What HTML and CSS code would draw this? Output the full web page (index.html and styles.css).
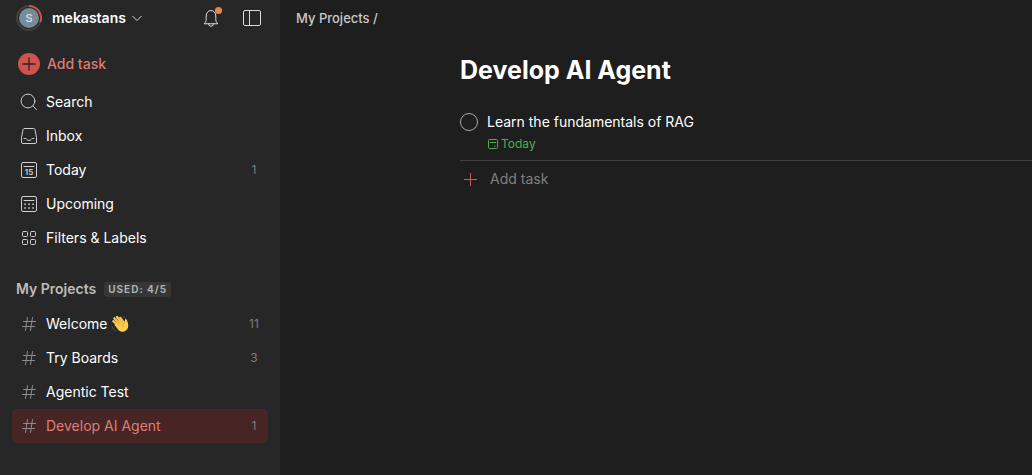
FILE: index.html
```html
<!DOCTYPE html>
<html lang="en">
<head>
<meta charset="utf-8">
<meta name="viewport" content="width=device-width, initial-scale=1">
<title>Develop AI Agent</title>
<link rel="stylesheet" href="styles.css">
</head>
<body>
<div class="app">
  <aside class="sidebar">
    <header class="topbar">
      <button class="account" type="button">
        <span class="avatar">
          <svg class="ring" viewBox="0 0 26 26" aria-hidden="true">
            <circle cx="13" cy="13" r="12" stroke="#414141" stroke-width="2"/>
            <path d="M13 1a12 12 0 0 1 11.3 16" stroke="#c9504b" stroke-width="2"/>
          </svg>
          <span class="initial">S</span>
        </span>
        <span class="name">mekastans</span>
        <svg class="chevron" viewBox="0 0 12 12" aria-hidden="true"><path d="M1.500 4L6 8.500 10.500 4"/></svg>
      </button>
      <div class="tools">
        <button class="tool" type="button" aria-label="Notifications">
          <svg class="icon bright" viewBox="0 0 24 24" aria-hidden="true">
            <path d="M5.500 17.500c1.300-1.200 1.700-2.400 1.700-5V10c0-3.100 2-5.500 4.800-5.500s4.800 2.400 4.800 5.500v2.500c0 2.600.4 3.800 1.700 5z"/>
            <path d="M9.500 17.800a2.500 2.500 0 0 0 5 0"/>
            <circle class="dot" cx="19.500" cy="4.500" r="3.600"/>
          </svg>
        </button>
        <button class="tool" type="button" aria-label="Toggle sidebar">
          <svg class="icon bright" viewBox="0 0 24 24" aria-hidden="true">
            <rect x="3.500" y="4.500" width="17" height="15" rx="1.500"/><path d="M9.500 4.500v15"/>
          </svg>
        </button>
      </div>
    </header>

    <button class="row add" type="button">
      <svg class="icon" viewBox="0 0 24 24" aria-hidden="true"><circle class="disc" cx="12" cy="12" r="11"/><path class="plus" d="M12 6v12M6 12h12"/></svg>
      <span class="label">Add task</span>
    </button>

    <nav class="list" aria-label="Views">
      <a class="row" href="#search">
        <svg class="icon" viewBox="0 0 24 24" aria-hidden="true"><circle cx="11" cy="11" r="6.900"/><path d="M16 16l3.500 3.500"/></svg>
        <span class="label">Search</span>
      </a>
      <a class="row" href="#inbox">
        <svg class="icon" viewBox="0 0 24 24" aria-hidden="true"><path d="M7.500 4.500h9a1.500 1.500 0 0 1 1.500 1.200l1.500 7.800V18a1.500 1.500 0 0 1-1.500 1.500H6A1.500 1.500 0 0 1 4.500 18v-4.500L6 5.700a1.500 1.500 0 0 1 1.500-1.200z"/><path d="M7 14.500h1.500c.7 0 1 .3 1.300.9.900 1.500 3.500 1.500 4.400 0 .3-.6.600-.9 1.300-.9H17"/></svg>
        <span class="label">Inbox</span>
      </a>
      <a class="row" href="#today">
        <svg class="icon" viewBox="0 0 24 24" aria-hidden="true"><rect x="4.500" y="4.500" width="15" height="15" rx="1.500"/><path d="M7 8.500h10"/><text class="day" x="12" y="17" text-anchor="middle">15</text></svg>
        <span class="label">Today</span><span class="count">1</span>
      </a>
      <a class="row" href="#upcoming">
        <svg class="icon" viewBox="0 0 24 24" aria-hidden="true"><rect x="4.500" y="4.500" width="15" height="15" rx="1.500"/><path d="M7 8.500h10"/><path class="dots" d="M7.300 12.300h1.500M11.300 12.300h1.500M15.300 12.300h1.500M7.300 16h1.500M11.300 16h1.500M15.300 16h1.500"/></svg>
        <span class="label">Upcoming</span>
      </a>
      <a class="row" href="#filters">
        <svg class="icon" viewBox="0 0 24 24" aria-hidden="true"><rect x="5.500" y="5.500" width="5" height="5" rx="1"/><rect x="13.500" y="5.500" width="5" height="5" rx="1"/><rect x="5.500" y="13.500" width="5" height="5" rx="1"/><rect x="13.500" y="13.500" width="5" height="5" rx="1"/></svg>
        <span class="label">Filters &amp; Labels</span>
      </a>
    </nav>

    <div class="section">
      <h2 class="heading">My Projects</h2><span class="badge">Used: 4/5</span>
    </div>

    <nav class="list" aria-label="My Projects">
      <a class="row" href="#welcome">
        <svg class="icon hash" viewBox="0 0 24 24" aria-hidden="true"><path d="M10.500 5.500l-2 13M15.500 5.500l-2 13M6.500 9.500h12M5.500 14.500h12"/></svg>
        <span class="label">Welcome
          <svg class="wave" viewBox="0 0 18 18" role="img" aria-label="waving hand">
            <g stroke="#ffcc4d" stroke-width="2.300" stroke-linecap="round">
              <path d="M8 11L2.300 6.200M9 9L3.400 3.300M11 8L6.100 2M13 8L9.300 3"/>
            </g>
            <path fill="#ffcc4d" d="M3.400 9.800L6 7l6.700-1.200 1.200 1.500c.3-1.300-.4-2.800.5-3.300 1.500-.5 1.800 2 2.500 4 .8 3.400.2 6-2 7.600-2.500 1.900-5.500 1.400-7.500-.6z"/>
            <g stroke="#d9932f" stroke-width=".7" stroke-linecap="round"><path d="M3.200 5.500L8 10M4.700 3.400L9.600 8.600M7.900 2.800L11.600 7.600M13.800 7.500c-2 .8-2.700 2.300-2 4"/></g>
            <g stroke="#505355" stroke-width="1" stroke-linecap="round"><path d="M12 1.500c1.300.3 2.200 1 2.700 2M1.200 12c.5 1.700 1.500 2.800 3.300 3.600"/></g>
          </svg>
        </span><span class="count">11</span>
      </a>
      <a class="row" href="#boards">
        <svg class="icon hash" viewBox="0 0 24 24" aria-hidden="true"><path d="M10.500 5.500l-2 13M15.500 5.500l-2 13M6.500 9.500h12M5.500 14.500h12"/></svg>
        <span class="label">Try Boards</span><span class="count">3</span>
      </a>
      <a class="row" href="#agentic">
        <svg class="icon hash" viewBox="0 0 24 24" aria-hidden="true"><path d="M10.500 5.500l-2 13M15.500 5.500l-2 13M6.500 9.500h12M5.500 14.500h12"/></svg>
        <span class="label">Agentic Test</span>
      </a>
      <a class="row current" href="#develop" aria-current="page">
        <svg class="icon hash" viewBox="0 0 24 24" aria-hidden="true"><path d="M10.500 5.500l-2 13M15.500 5.500l-2 13M6.500 9.500h12M5.500 14.500h12"/></svg>
        <span class="label">Develop AI Agent</span><span class="count">1</span>
      </a>
    </nav>
  </aside>

  <main class="main">
    <div class="crumbs"><a href="#projects">My Projects</a> /</div>
    <section class="project">
      <h1 class="title">Develop AI Agent</h1>
      <div class="task">
        <input class="check" type="checkbox" id="task-1">
        <div class="body">
          <label class="text" for="task-1">Learn the fundamentals of RAG</label>
          <button class="due" type="button">
            <svg class="calendar" viewBox="0 0 12 12" aria-hidden="true"><rect x="1.500" y="1.500" width="9" height="9" rx="1"/><path d="M3 4.500h6M7 8h1.500"/></svg>
            Today
          </button>
        </div>
      </div>
      <button class="new" type="button">
        <svg class="cross" viewBox="0 0 13 13" aria-hidden="true"><path d="M6.500 0v13M0 6.500h13"/></svg>
        Add task
      </button>
    </section>
  </main>
</div>
</body>
</html>
```
FILE: styles.css
```css
* { box-sizing: border-box; }
body {
  margin: 0;
  background: #1e1e1e;
  color: #fff;
  font: 14px/20px Inter, "Liberation Sans", sans-serif;
}
button {
  margin: 0;
  padding: 0;
  border: 0;
  background: none;
  color: inherit;
  font: inherit;
  text-align: left;
}
a { color: inherit; text-decoration: none; }
svg { display: block; flex: none; fill: none; }

.app { display: flex; min-height: 100vh; }
.sidebar { flex: none; width: 280px; padding: 0 12px; background: #272727; }

.topbar {
  display: flex;
  align-items: center;
  justify-content: space-between;
  height: 36px;
  margin-bottom: 11px;
  padding: 0 4px;
}
.account { display: flex; align-items: center; font-weight: 600; }
.avatar { display: grid; place-items: center; margin-right: 10px; }
.avatar > * { grid-area: 1 / 1; }
.ring { width: 26px; height: 26px; }
.initial {
  width: 20px;
  height: 20px;
  border-radius: 50%;
  background: #768d99;
  color: #dfe5e8;
  font-size: 11px;
  font-weight: 500;
  text-align: center;
}
.chevron { width: 12px; height: 12px; margin-left: 5px; stroke: #d5d5d5; }
.tools { display: flex; gap: 17px; }

.icon { width: 24px; height: 24px; stroke: #cfcfcf; stroke-linecap: round; stroke-linejoin: round; }
.bright { overflow: visible; stroke: #dcdcdc; }
.dot { fill: #e5883a; stroke: none; }
.disc { fill: #cf524d; stroke: none; }
.plus { stroke: #272727; stroke-width: 1.300; }
.hash { stroke: #8b8b8b; }
.dots { stroke-width: 1.500; stroke-linecap: butt; }
.day { fill: #cfcfcf; stroke: none; font-size: 8px; font-weight: 600; }

.list { display: flex; flex-direction: column; }
.row {
  display: flex;
  align-items: center;
  gap: 5px;
  width: 100%;
  height: 34px;
  padding-left: 5px;
  border-radius: 5px;
}
.add { gap: 6px; margin-bottom: 4px; color: #de7b74; font-weight: 500; }
.label { display: flex; flex: 1; align-items: center; gap: 4px; }
.count { width: 28px; color: #7d7d7d; font-size: 12px; text-align: center; }
.current { background: #472525; color: #dd7f78; }
.wave { width: 18px; height: 18px; }

.section { display: flex; align-items: center; gap: 8px; height: 34px; margin-top: 17px; margin-bottom: 1px; padding-left: 4px; }
.heading { margin: 0; color: #bdbdbd; font-size: 14px; font-weight: 600; }
.badge {
  padding: 0 4px;
  border-radius: 3px;
  background: #363636;
  color: #b0b0b0;
  font-size: 10px;
  font-weight: 700;
  letter-spacing: 1px;
  line-height: 15px;
  text-transform: uppercase;
}

.main { flex: 1; min-width: 0; }
.crumbs { padding: 8px 16px; color: #c9c9c9; font-size: 13px; font-weight: 500; }
.project { padding: 18px 0 0 180px; }
.title { margin: 0 0 22px; font-size: 25px; font-weight: 700; line-height: 32px; }
.task { display: flex; gap: 9px; padding: 4px 0 8px; border-bottom: 1px solid #424242; }
.check {
  appearance: none;
  flex: none;
  width: 18px;
  height: 18px;
  margin: 1px 0 0;
  border: 1px solid #aaa;
  border-radius: 50%;
}
.body { display: flex; flex-direction: column; align-items: flex-start; gap: 4px; }
.due { display: flex; align-items: center; gap: 2px; color: #4fae4f; font-size: 12px; line-height: 16px; }
.calendar { width: 12px; height: 12px; stroke: #4fae4f; }
.new { display: flex; align-items: center; gap: 13px; margin-top: 8px; padding-left: 4px; color: #808080; }
.cross { width: 13px; height: 13px; stroke: #d25a51; }
```
